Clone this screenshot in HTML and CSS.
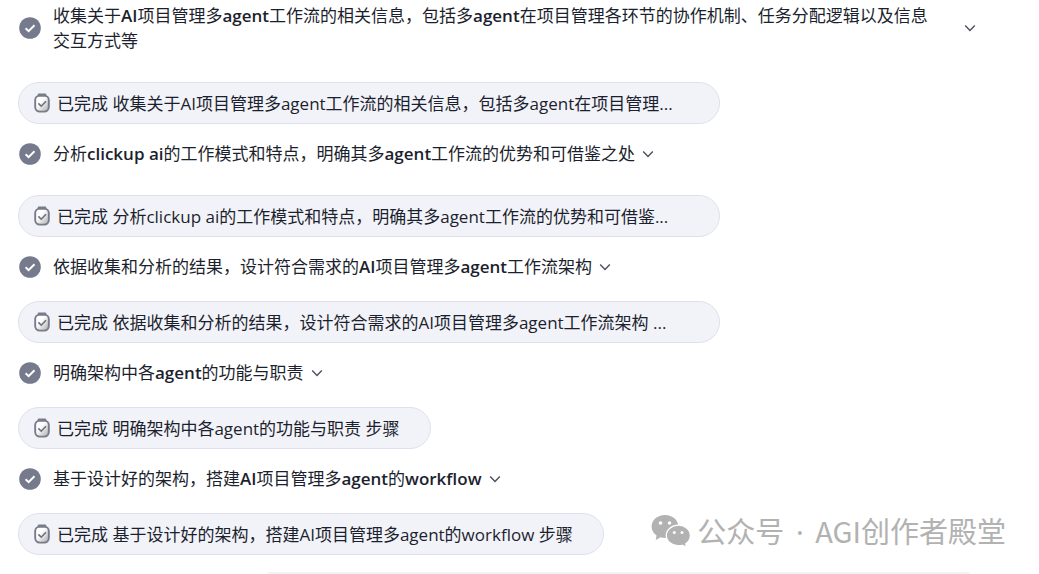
FILE: index.html
```html
<!DOCTYPE html>
<html lang="zh-CN">
<head>
    <meta charset="UTF-8">
    <meta name="viewport" content="width=device-width, initial-scale=1.0">
    <title>AI项目管理多agent工作流</title>
    <link rel="stylesheet" href="styles.css">
</head>
<body>
    <!-- 公用图标 -->
    <svg class="icons" width="0" height="0">
        <defs>
            <linearGradient id="board" x1="0" y1="0" x2="1" y2="1">
                <stop offset="0.4" stop-color="#ffffff"/>
                <stop offset="1" stop-color="#a9a9a9"/>
            </linearGradient>
        </defs>
        <symbol id="done" viewBox="0 0 22 22">
            <circle cx="11" cy="11" r="10.8" fill="#757a8d"/>
            <path d="M6.6 11.2l3 2.9 5.9-5.8" fill="none" stroke="#fff" stroke-width="2"/>
        </symbol>
        <symbol id="arrow" viewBox="0 0 12 12">
            <path d="M1.2 3.6L6 8.4l4.8-4.8" fill="none" stroke="#4a4e5e" stroke-width="1.4"/>
        </symbol>
        <symbol id="task" viewBox="0 0 16 20">
            <rect x="1.2" y="2.6" width="13.6" height="16" rx="4.5" fill="url(#board)" stroke="#777c8c" stroke-width="1.9"/>
            <path d="M3.6 3.6V2q0-1.4 1.4-1.4h6q1.4 0 1.4 1.4v1.6z" fill="#777c8c"/>
            <path d="M4.4 10.4l2.8 2.8 4.8-4.9" fill="none" stroke="#6b7080" stroke-width="1.6"/>
        </symbol>
    </svg>

    <main class="steps">
        <section class="step step-wide">
            <button class="title title-full" type="button">
                <svg class="done"><use href="#done"/></svg>
                <span>收集关于<b>AI</b>项目管理多<b>agent</b>工作流的相关信息，包括多<b>agent</b>在项目管理各环节的协作机制、任务分配逻辑以及信息<br>交互方式等</span>
                <svg class="arrow"><use href="#arrow"/></svg>
            </button>
            <div class="pill pill-long">
                <svg class="task"><use href="#task"/></svg>
                <span>已完成 收集关于AI项目管理多agent工作流的相关信息，包括多agent在项目管理...</span>
            </div>
        </section>
        <section class="step step-wide">
            <button class="title" type="button">
                <svg class="done"><use href="#done"/></svg>
                <span>分析<b>clickup ai</b>的工作模式和特点，明确其多<b>agent</b>工作流的优势和可借鉴之处</span>
                <svg class="arrow"><use href="#arrow"/></svg>
            </button>
            <div class="pill pill-long">
                <svg class="task"><use href="#task"/></svg>
                <span>已完成 分析clickup ai的工作模式和特点，明确其多agent工作流的优势和可借鉴...</span>
            </div>
        </section>
        <section class="step">
            <button class="title" type="button">
                <svg class="done"><use href="#done"/></svg>
                <span>依据收集和分析的结果，设计符合需求的<b>AI</b>项目管理多<b>agent</b>工作流架构</span>
                <svg class="arrow"><use href="#arrow"/></svg>
            </button>
            <div class="pill pill-long">
                <svg class="task"><use href="#task"/></svg>
                <span>已完成 依据收集和分析的结果，设计符合需求的AI项目管理多agent工作流架构 ...</span>
            </div>
        </section>
        <section class="step">
            <button class="title" type="button">
                <svg class="done"><use href="#done"/></svg>
                <span>明确架构中各<b>agent</b>的功能与职责</span>
                <svg class="arrow"><use href="#arrow"/></svg>
            </button>
            <div class="pill">
                <svg class="task"><use href="#task"/></svg>
                <span>已完成 明确架构中各agent的功能与职责 步骤</span>
            </div>
        </section>
        <section class="step">
            <button class="title" type="button">
                <svg class="done"><use href="#done"/></svg>
                <span>基于设计好的架构，搭建<b>AI</b>项目管理多<b>agent</b>的<b>workflow</b></span>
                <svg class="arrow"><use href="#arrow"/></svg>
            </button>
            <div class="pill">
                <svg class="task"><use href="#task"/></svg>
                <span>已完成 基于设计好的架构，搭建AI项目管理多agent的workflow 步骤</span>
            </div>
        </section>
        <!-- 下一条消息的顶部 -->
        <div class="next"></div>
    </main>

    <!-- 右下角水印 -->
    <div class="mark">
        <svg class="wechat" viewBox="0 0 40 34">
            <path d="M14 1C6.5 1 .6 6 .6 12.5c0 3.7 1.9 6.9 5 9L4.7 26l5-2.7c1.4.4 2.8.6 4.3.6 7.4 0 13.4-5 13.4-11.4S21.4 1 14 1z" fill="#b2b2b2"/>
            <path d="M27.5 11.2c-6.8 0-12.2 4.600-12.2 10.3s5.4 10.3 12.2 10.3c1.4 0 2.7-.2 3.9-.5l4.1 2.2-.8-3.8c3-1.9 4.7-4.9 4.7-8.2 0-5.7-5.2-10.3-11.9-10.3z" fill="#b2b2b2" stroke="#fff" stroke-width="1.3"/>
            <circle cx="9.5" cy="9" r="1.8" fill="#fff"/>
            <circle cx="18.5" cy="9" r="1.8" fill="#fff"/>
            <circle cx="23.3" cy="18.6" r="1.5" fill="#fff"/>
            <circle cx="31" cy="18.6" r="1.5" fill="#fff"/>
        </svg>
        <span>公众号<span class="dot"> · </span>AGI创作者殿堂</span>
    </div>
</body>
</html>
```
FILE: styles.css
```css
*{
    box-sizing: border-box;
    margin: 0;
    padding: 0;
}
body{
    background-color: #fff;
    color: #1c1f2e;
    font: 17px/25px "Open Sans", "Noto Sans CJK SC", sans-serif;
}
.icons{
    position: absolute;
}
svg{
    flex: none;
}
.steps{
    padding: 3px 63px 0 18px;
}
/*每个步骤: 标题 + 状态胶囊*/
.step{
    display: flex;
    flex-direction: column;
    align-items: flex-start;
    gap: 22px;
    margin-bottom: 17px;
}
.step-wide{
    gap: 29px;
}
.title{
    display: flex;
    align-items: center;
    padding-left: 1px;
    border: 0;
    background: none;
    color: inherit;
    font: inherit;
    text-align: left;
    cursor: pointer;
}
/*两行标题占满整行,箭头靠右*/
.title-full{
    width: 100%;
}
.title-full span{
    flex: 1;
}
.title b{
    font-weight: 600;
}
.done{
    width: 22px;
    height: 22px;
    margin-right: 12px;
}
.arrow{
    width: 12px;
    height: 12px;
    margin-left: 7px;
}
/*状态胶囊*/
.pill{
    display: flex;
    align-items: center;
    gap: 7px;
    max-width: 100%;
    height: 42px;
    padding: 0 30px 0 15px;
    border: 1px solid #dfe0ed;
    border-radius: 21px;
    background-color: #f2f3f9;
    white-space: nowrap;
}
.pill-long{
    width: 702px;
}
.task{
    width: 16px;
    height: 20px;
}
.next{
    height: 2px;
    margin: 0 6px 0 250px;
    border-radius: 2px 2px 0 0;
    background-color: #f2f3f9;
}
/*水印浮在内容上面*/
.mark{
    position: absolute;
    right: 33px;
    bottom: 22px;
    display: flex;
    align-items: center;
    gap: 6px;
    color: #b2b2b2;
    font: 29px/40px "Noto Sans CJK SC", sans-serif;
}
.dot{
    padding: 0 4px;
    font-family: "Noto Sans", sans-serif;
}
.wechat{
    width: 40px;
    height: 34px;
}
```
